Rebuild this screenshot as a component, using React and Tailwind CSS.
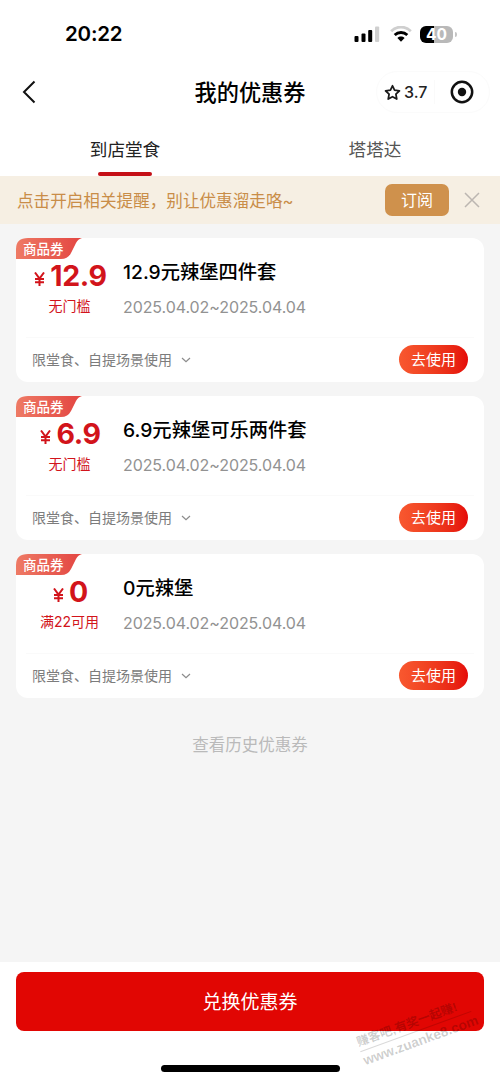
import React from "react";

const coupons = [
  { price: "12.9", rule: "无门槛", title: "12.9元辣堡四件套" },
  { price: "6.9", rule: "无门槛", title: "6.9元辣堡可乐两件套" },
  { price: "0", rule: "满22可用", title: "0元辣堡" },
];

function StatusBar() {
  return (
    <div className="flex h-[68px] items-center justify-between pl-[65px] pr-[43px]">
      <span className="text-[20.5px] leading-6 font-semibold tracking-[-0.2px]">20:22</span>
      <div className="flex items-center">
        <svg width="26" height="16" viewBox="0 0 26 16">
          <rect x="0.5" y="10" width="4" height="6" rx="1" fill="#000" />
          <rect x="7.5" y="7.5" width="4" height="8.500" rx="1" fill="#000" />
          <rect x="14.200" y="4" width="4" height="12" rx="1" fill="#000" />
          <rect x="21" y="0.500" width="4.200" height="15.500" rx="1" fill="#cfcfcf" />
        </svg>
        <svg className="ml-2.5" width="22" height="16" viewBox="0 0 22 16">
          <path d="M1.200 5.200C6.700 -0.300 15.300 -0.300 20.800 5.200" fill="none" stroke="#cfcfcf" strokeWidth="2.800" />
          <path d="M4.700 9.100C8.200 5.600 13.800 5.600 17.300 9.100" fill="none" stroke="#000" strokeWidth="2.800" />
          <path d="M7.400 12C9.500 10.100 12.500 10.100 14.600 12L11 15.800Z" fill="#000" />
        </svg>
        <div className="ml-2 flex h-[17px] w-[33px] items-center justify-center rounded-[6px] bg-[linear-gradient(to_right,#000_41%,#b9b9b9_41%)] pt-px text-[15.5px] leading-[17px] font-bold text-white">
          40
        </div>
        <span className="ml-0.5 h-[5px] w-[2px] rounded-r-full bg-[#c4c4c4]" />
      </div>
    </div>
  );
}

function NavBar() {
  return (
    <div className="grid h-12 grid-cols-[1fr_auto_1fr] items-center">
      <svg className="ml-[22px]" width="14" height="24" viewBox="0 0 14 24">
        <path d="M12.500 1.500L2 12L12.500 22.500" fill="none" stroke="#111" strokeWidth="2" />
      </svg>
      <h1 className="pt-px text-[22.2px] leading-7 font-medium">我的优惠券</h1>
      <div className="mr-2.5 flex h-[42px] w-[114px] items-center justify-self-end rounded-full border border-[#fbfbfb]">
        <svg className="ml-[7px]" width="17" height="17" viewBox="0 0 24 24">
          <path d="M12 2.500L14.900 8.700L21.800 9.600L16.800 14.300L18 21.200L12 17.900L6 21.200L7.200 14.300L2.200 9.600L9.100 8.700Z" fill="none" stroke="#1a1a1a" strokeWidth="2.500" strokeLinejoin="round" />
        </svg>
        <span className="ml-[3px] text-[16px] font-medium text-[#222]">3.7</span>
        <span className="ml-[7px] h-6 w-px bg-[#fafafa]" />
        <svg className="ml-[15px]" width="24" height="24" viewBox="0 0 24 24">
          <circle cx="12" cy="12" r="10.200" fill="none" stroke="#111" strokeWidth="2.500" />
          <circle cx="12" cy="12" r="4.200" fill="#111" />
        </svg>
      </div>
    </div>
  );
}

function Tabs() {
  return (
    <div className="grid h-[60px] grid-cols-2 text-center text-[17.6px] leading-[26px]">
      <div className="flex flex-col items-center pt-[21px] text-[#222]">
        <span>到店堂食</span>
        <span className="mt-[9px] h-1 w-[54px] rounded-full bg-[#c51017]" />
      </div>
      <div className="pt-[21px] text-[#555]">塔塔达</div>
    </div>
  );
}

function Notice() {
  return (
    <div className="flex h-12 items-center bg-[#f6efe3] pl-[17px] pr-5">
      <span className="flex-1 pt-0.5 text-[16.6px] whitespace-nowrap text-[#c98d48]">点击开启相关提醒，别让优惠溜走咯~</span>
      <button className="h-8 w-16 rounded-[7px] bg-[#cf914c] text-[16px] leading-8 text-white">订阅</button>
      <svg className="ml-[15px]" width="16" height="16" viewBox="0 0 16 16">
        <path d="M1 1L15 15M15 1L1 15" stroke="#bcb6b1" strokeWidth="1.500" />
      </svg>
    </div>
  );
}

function Coupon({ price, rule, title }) {
  return (
    <div className="relative flex h-36 flex-col rounded-xl bg-white">
      <div className="absolute top-0 left-0 h-[21px] w-[67px]">
        <svg className="absolute inset-0" width="67" height="21" viewBox="0 0 67 21">
          <defs>
            <linearGradient id="ribbon">
              <stop offset="0" stopColor="#ee7a65" />
              <stop offset="1" stopColor="#e34541" />
            </linearGradient>
          </defs>
          <path d="M0 21V11Q0 0 12 0H66Q62 1 60 5L55 15Q52 21 45 21Z" fill="url(#ribbon)" />
        </svg>
        <span className="relative block pl-[7px] text-[13.5px] leading-[22px] font-medium text-white">商品券</span>
      </div>
      <div className="flex h-[99px]">
        <div className="w-[107px] pt-[22px] text-center text-[#d2141b]">
          <div className="flex h-8 items-baseline justify-center pl-0.5 leading-8 font-bold">
            <svg className="mr-[5px] mb-0.5" width="11" height="14" viewBox="0 0 11 14">
              <path d="M1 0.500L5.500 6.500L10 0.500M1 7H10M1 10.300H10M5.500 6.500V14" fill="none" stroke="#d2141b" strokeWidth="2" />
            </svg>
            <span className="text-[28.5px] tracking-[-0.4px]">{price}</span>
          </div>
          <div className="mt-1 text-[14px] leading-5">{rule}</div>
        </div>
        <div className="pt-5">
          <h2 className="text-[19.3px] leading-7 font-medium text-black">{title}</h2>
          <p className="mt-[9px] text-[16px] leading-6 tracking-[-0.08px] text-[#929292]">2025.04.02~2025.04.04</p>
        </div>
      </div>
      <div className="mx-2.5 flex h-[45px] items-center border-t border-[#fafafa] px-1.5 pb-0.5">
        <span className="text-[14px] text-[#7c7c7c]">限堂食、自提场景使用</span>
        <svg className="mt-0.5 ml-[9px]" width="10" height="6" viewBox="0 0 10 6">
          <path d="M1 1L5 4.700L9 1" fill="none" stroke="#8c8c8c" strokeWidth="1.200" />
        </svg>
        <button className="ml-auto h-[29px] w-[69px] rounded-full bg-linear-to-r from-[#f8582f] to-[#e50909] text-[15px] leading-[29px] text-white">去使用</button>
      </div>
    </div>
  );
}

function Footer() {
  return (
    <div className="relative flex h-[121px] flex-col items-center overflow-hidden bg-white px-4 pt-2.5">
      <button className="h-[59px] w-full rounded-lg bg-[#e10603] pt-[3px] text-[19px] text-white">兑换优惠券</button>
      <span className="mt-[34px] h-[7px] w-[179px] rounded-full bg-black" />
      <div className="absolute top-[51px] left-[357px] flex w-[118px] origin-center -rotate-[20deg] flex-col gap-px font-['Liberation_Sans','Noto_Sans_CJK_SC',sans-serif] font-bold whitespace-nowrap text-black/20">
        <div className="border-b border-black/15 text-[12.3px] leading-[18px]">赚客吧,有奖一起赚!</div>
        <div className="text-[13.7px] leading-[18px]">www.zuanke8.com</div>
      </div>
    </div>
  );
}

export default function App() {
  return (
    <div className="flex h-[1083px] w-[500px] flex-col overflow-hidden bg-[#f5f5f5] font-[Inter,'Noto_Sans_CJK_SC',sans-serif] text-black">
      <div className="bg-white">
        <StatusBar />
        <NavBar />
        <Tabs />
      </div>
      <Notice />
      <main className="flex flex-1 flex-col gap-3.5 px-4 pt-3.5">
        {coupons.map((coupon) => (
          <Coupon key={coupon.title} {...coupon} />
        ))}
        <p className="mt-[21px] text-center text-[16.5px] leading-6 text-[#bababa]">查看历史优惠券</p>
      </main>
      <Footer />
    </div>
  );
}
